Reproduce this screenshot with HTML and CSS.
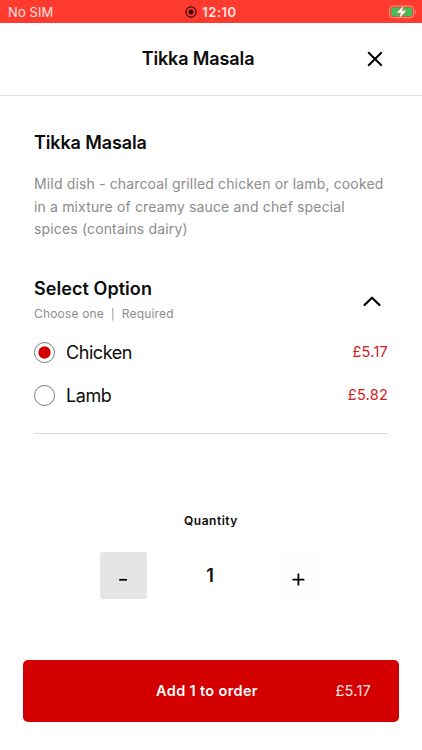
FILE: index.html
```html
<!DOCTYPE html>
<html lang="en">
<head>
<meta charset="utf-8">
<title>Tikka Masala</title>
<link rel="stylesheet" href="styles.css">
</head>
<body>
<div class="status">
  <span class="carrier">No SIM</span>
  <span class="clock">
    <svg width="12" height="12" viewBox="0 0 12 12"><circle cx="6" cy="6" r="5.1" fill="none" stroke="#3a0805" stroke-width="1.1"/><circle cx="6" cy="6" r="2.5" fill="#3a0805"/></svg>
    <span class="time">12:10</span>
  </span>
  <svg class="battery" width="28" height="14" viewBox="0 0 28 14"><rect x=".7" y="1.1" width="23.8" height="11.6" rx="3" fill="none" stroke="#e3a08b"/><rect x="2.2" y="2.6" width="20.8" height="8.6" rx="1.7" fill="#43bd55"/><path d="M26 5v4q1.3-.6 1.3-2T26 5z" fill="#ff9189"/><path d="M14.7.2 7.3 7.9h4.3l-1.5 5.6 7.8-7.9h-4.6z" fill="#fff" stroke="#ff3b30" stroke-width=".4"/></svg>
</div>
<header class="header">
  <h1 class="title">Tikka Masala</h1>
  <svg class="close" width="16" height="16" viewBox="0 0 16 16"><path d="M1.2 1.2 14.8 14.8M14.8 1.2 1.2 14.8" stroke="#000" stroke-width="2"/></svg>
</header>
<main class="content">
  <h2 class="name">Tikka Masala</h2>
  <p class="description">Mild dish - charcoal grilled chicken or lamb, cooked<br>in a mixture of creamy sauce and chef special<br>spices (contains dairy)</p>
  <section class="options">
    <div class="options-head">
      <div>
        <h3 class="options-title">Select Option</h3>
        <p class="hint">Choose one &nbsp;<span class="bar">|</span>&nbsp; Required</p>
      </div>
      <svg class="chevron" width="18" height="11" viewBox="0 0 18 11"><path d="M1.5 9 9 1.7 16.5 9" fill="none" stroke="#000" stroke-width="2.2" stroke-linecap="round" stroke-linejoin="round"/></svg>
    </div>
    <div class="option"><span class="radio checked"></span><span class="label">Chicken</span><span class="price">£5.17</span></div>
    <div class="option"><span class="radio"></span><span class="label">Lamb</span><span class="price">£5.82</span></div>
  </section>
</main>
<section class="quantity">
  <h4 class="quantity-title">Quantity</h4>
  <div class="stepper">
    <div class="step minus"><svg width="47" height="47" viewBox="0 0 47 47"><path d="M19.2 27.8h7.8" stroke="#000" stroke-width="1.8"/></svg></div>
    <span class="count">1</span>
    <div class="step plus"><svg width="47" height="47" viewBox="0 0 47 47"><path d="M17.4 27.6h12M23.4 21.6v12" stroke="#000" stroke-width="1.8"/></svg></div>
  </div>
</section>
<div class="order"><span class="order-label">Add 1 to order</span><span class="order-price">£5.17</span></div>
</body>
</html>
```
FILE: styles.css
```css
* { box-sizing: border-box; }
body, h1, h2, h3, h4, p { margin: 0; }
body {
  width: 422px;
  height: 750px;
  overflow: hidden;
  background: #fff;
  color: #0c0c0c;
  font-family: Inter, "Liberation Sans", sans-serif;
}
svg { display: block; flex: none; }
.status {
  display: grid;
  grid-template-columns: 1fr auto 1fr;
  align-items: center;
  height: 23px;
  padding: 1px 5px 0 5px;
  background: #ff3b30;
  color: #ffe5e3;
}
.carrier { padding-left: 3px; font-size: 13px; letter-spacing: .1px; }
.clock { display: flex; align-items: center; gap: 5px; }
.time { font-size: 13px; font-weight: 600; letter-spacing: .5px; }
.battery { justify-self: end; }
.header {
  display: grid;
  grid-template-columns: 1fr auto 1fr;
  align-items: center;
  height: 73px;
  padding: 0 39px 0 13px;
  border-bottom: 1px solid #e2e2e2;
}
.title { grid-column: 2; font-size: 18px; font-weight: 600; line-height: 24px; letter-spacing: -.12px; }
.close { justify-self: end; }
.content { padding: 35px 34px 0; }
.name { font-size: 18px; font-weight: 600; line-height: 24px; letter-spacing: -.12px; }
.description {
  margin-top: 18px;
  color: #8c8c8c;
  font-size: 14px;
  line-height: 22.5px;
  letter-spacing: .15px;
  white-space: nowrap;
}
.options { height: 158px; margin-top: 35px; border-bottom: 1px solid #dcdcdc; }
.options-head { display: flex; justify-content: space-between; height: 50px; padding-right: 7px; }
.options-title { font-size: 18px; font-weight: 600; line-height: 26px; letter-spacing: .06px; }
.hint { color: #8c8c8c; font-size: 12px; line-height: 24px; letter-spacing: .17px; }
.bar { font-size: 10.5px; }
.chevron { margin-top: 20px; }
.option { display: flex; align-items: center; height: 43px; }
.options-head + .option { margin-top: 5px; }
.radio {
  width: 21px;
  height: 21px;
  border: 1px solid #777;
  border-radius: 50%;
}
.checked { background: radial-gradient(circle, #d40000 5.7px, #fff 6.5px); }
.label { margin-left: 11px; font-size: 18px; letter-spacing: -.45px; }
.price { margin-left: auto; color: #d51c20; font-size: 14.6px; letter-spacing: .2px; }
.quantity { margin-top: 77px; }
.quantity-title { text-align: center; font-size: 12px; font-weight: 600; line-height: 20px; letter-spacing: .5px; }
.stepper {
  display: flex;
  align-items: center;
  justify-content: space-between;
  margin: 21px 100px 0;
}
.step { width: 47px; height: 47px; border-radius: 3px; }
.minus { background: #e5e5e5; }
.plus { background: #fefefe; }
.count { margin-right: 2px; font-size: 18px; font-weight: 600; }
.order {
  display: grid;
  grid-template-columns: 1fr auto 1fr;
  align-items: center;
  height: 62px;
  margin: 61px 23px 0;
  padding: 0 28px 0 20px;
  border-radius: 5px;
  background: #d40000;
  color: #fff;
}
.order-label { grid-column: 2; font-size: 14.5px; font-weight: 600; letter-spacing: .35px; }
.order-price { justify-self: end; font-size: 14.6px; letter-spacing: .2px; color: #ffe3e3; }
```
